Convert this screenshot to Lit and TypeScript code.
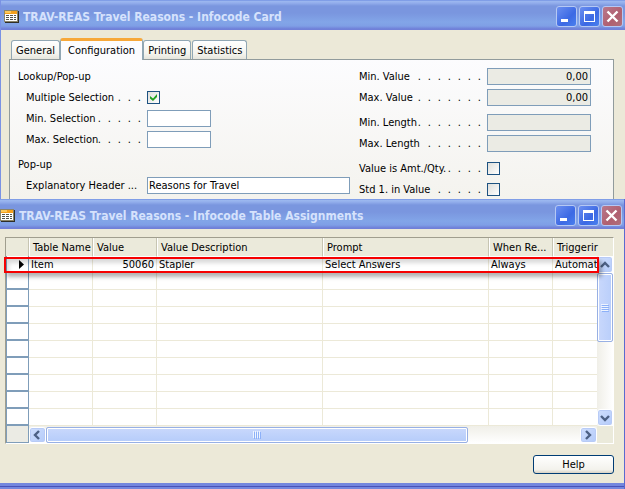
import { LitElement, html, css, svg } from "lit";
import { customElement, property } from "lit/decorators.js";

const formFont = css`11px "DejaVu Sans Condensed", "Open Sans", sans-serif`;

@customElement("title-bar")
class TitleBar extends LitElement {
  @property() caption = "";

  static styles = css`
    :host { display: block; }
    .bar {
      display: flex;
      align-items: center;
      height: 30px;
      box-sizing: border-box;
      padding: 3px 2px 0 3px;
      gap: 4px;
      background: linear-gradient(#6383de 0, #9db9f0 1px, #93aeec 3px, #7a96df 6px, #7a96df 13px, #82a5e8 22px, #7f9fe6 26px, #6f7fd8 29px, #7281d8 30px);
    }
    :host([flush]) .bar { padding-left: 0; }
    h1 {
      flex: 1;
      min-width: 0;
      margin: 0;
      font: bold 12px "DejaVu Sans Condensed", "Open Sans", sans-serif;
      color: #d6e2fc;
      white-space: nowrap;
      overflow: hidden;
    }
    .controls { display: flex; gap: 2px; }
    button {
      width: 21px;
      height: 21px;
      padding: 0;
      border: 1px solid #b5c8f4;
      border-radius: 3px;
      background: linear-gradient(135deg, #6b8ff0, #3c69e4 60%, #4a80ee);
      display: flex;
    }
    .close { background: linear-gradient(135deg, #b9788c, #b06070 60%, #b0707c); }
    svg { display: block; }
  `;

  render() {
    return html`
      <div class="bar">
        <svg width="15" height="13" viewBox="0 0 15 13" shape-rendering="crispEdges" aria-hidden="true">
          <path fill="#8a8468" d="M0 0h14v12H0z" />
          <path fill="#2e2e28" d="M14 1h1v12H1v-1h13z" />
          <path fill="#fff" d="M1 4h12v7H1z" />
          <path fill="#f5a01c" d="M1 1h12v3H1z" />
          <path fill="#fcc95a" d="M1 1h6v2H1z" />
          <path stroke="#55554c" d="M2 5.500h3M6 5.500h3M10 5.500h2M2 7.500h3M6 7.500h3M10 7.500h2M2 9.500h3M6 9.500h3M10 9.500h2" />
        </svg>
        <h1>${this.caption}</h1>
        <div class="controls">
          <button aria-label="Minimize">
            <svg width="19" height="19"><path fill="#fff" d="M4 12h7v3H4z" /></svg>
          </button>
          <button aria-label="Maximize">
            <svg width="19" height="19"><path fill="#fff" fill-rule="evenodd" d="M4 4h11v11H4zM5 7v7h9V7z" /></svg>
          </button>
          <button class="close" aria-label="Close">
            <svg width="19" height="19"><path stroke="#fff" stroke-width="2.4" d="M4.500 4.500l10 10M14.500 4.500l-10 10" /></svg>
          </button>
        </div>
      </div>
    `;
  }
}

interface Field {
  id: string;
  label: string;
  dots: number;
  kind: "check" | "short" | "wide" | "locked";
  value?: string;
  checked?: boolean;
}

const selectionFields: Field[] = [
  { id: "multi", label: "Multiple Selection", dots: 3, kind: "check", checked: true },
  { id: "minsel", label: "Min. Selection", dots: 5, kind: "short" },
  { id: "maxsel", label: "Max. Selection", dots: 5, kind: "short" },
];
const popupFields: Field[] = [
  { id: "header", label: "Explanatory Header ...", dots: 0, kind: "wide", value: "Reasons for Travel" },
];
const valueFields: Field[] = [
  { id: "minval", label: "Min. Value", dots: 7, kind: "locked", value: "0,00" },
  { id: "maxval", label: "Max. Value", dots: 7, kind: "locked", value: "0,00" },
];
const lengthFields: Field[] = [
  { id: "minlen", label: "Min. Length", dots: 7, kind: "locked" },
  { id: "maxlen", label: "Max. Length", dots: 6, kind: "locked" },
];
const flagFields: Field[] = [
  { id: "amt", label: "Value is Amt./Qty.", dots: 4, kind: "check" },
  { id: "std", label: "Std 1. in Value", dots: 5, kind: "check" },
];

@customElement("infocode-card")
class InfocodeCard extends LitElement {
  static styles = css`
    :host { display: block; font: ${formFont}; color: #000; }
    .window { border-left: 1px solid #7a92e4; background: #ece9d8; }
    .tabs { display: flex; align-items: flex-end; height: 29px; padding-left: 10px; }
    .tab {
      font: inherit;
      color: inherit;
      height: 19px;
      padding: 0 4px;
      border: 1px solid #91a7b4;
      border-bottom: 0;
      border-radius: 3px 3px 0 0;
      background: linear-gradient(#fff, #f4f4ee 70%, #e6e5dc);
    }
    .tab + .tab { margin-left: 1px; }
    .tab.active {
      height: 22px;
      padding: 0 7px;
      margin: 0 -1px -1px 0;
      border-top: 3px solid #f7a83a;
      background: #fcfcfe;
      position: relative;
    }
    .panel {
      display: grid;
      grid-template-columns: 341px 1fr;
      height: 140px;
      box-sizing: border-box;
      margin: 0 11px 0 8px;
      padding: 6px 0 0 8px;
      border: solid #919b9c;
      border-width: 1px 1px 0;
      background: linear-gradient(#fcfcfe, #f4f3ee);
    }
    .group { margin-bottom: 4px; }
    .caption { display: flex; align-items: center; height: 21px; margin: 0; font: inherit; }
    .row { display: flex; align-items: center; height: 21px; }
    .left .row { padding-left: 8px; }
    label { display: flex; width: 115px; padding-right: 6px; white-space: nowrap; }
    .right label { width: 122px; }
    .dots { flex: 1; min-width: 0; display: flex; justify-content: flex-end; }
    .dots i { flex: none; width: 10px; text-align: right; font-style: normal; }
    input { box-sizing: border-box; margin: 0; font: inherit; color: inherit; }
    input[type="text"] { height: 17px; padding: 0 1px; border: 1px solid #7f9db9; border-radius: 0; background: #fff; }
    input.short { width: 64px; }
    input.wide { width: 203px; }
    input.locked { width: 104px; padding: 0 2px; text-align: right; background: #ebebe4; }
    input[type="checkbox"] {
      appearance: none;
      width: 13px;
      height: 13px;
      border: 1px solid #1d5281;
      background: linear-gradient(135deg, #dededa, #fff);
      display: grid;
      place-items: center;
    }
    input[type="checkbox"]:checked::before {
      content: "";
      width: 7px;
      height: 7px;
      background: #21a121;
      clip-path: polygon(0 29%, 43% 64%, 100% 0, 100% 43%, 43% 100%, 0 64%);
    }
  `;

  private row(f: Field) {
    return html`
      <div class="row">
        <label for=${f.id}><span>${f.label}</span><span class="dots">${Array.from({ length: f.dots }, () => html`<i>.</i>`)}</span></label>
        ${f.kind === "check"
          ? html`<input type="checkbox" id=${f.id} ?checked=${f.checked} />`
          : html`<input type="text" class=${f.kind} id=${f.id} .value=${f.value ?? ""} ?readonly=${f.kind === "locked"} />`}
      </div>
    `;
  }

  render() {
    return html`
      <section class="window">
        <title-bar caption="TRAV-REAS Travel Reasons - Infocode Card"></title-bar>
        <div class="tabs" role="tablist">
          <button class="tab" role="tab">General</button>
          <button class="tab active" role="tab" aria-selected="true">Configuration</button>
          <button class="tab" role="tab">Printing</button>
          <button class="tab" role="tab">Statistics</button>
        </div>
        <div class="panel">
          <div class="left">
            <div class="group">
              <h2 class="caption">Lookup/Pop-up</h2>
              ${selectionFields.map((f) => this.row(f))}
            </div>
            <div class="group">
              <h2 class="caption">Pop-up</h2>
              ${popupFields.map((f) => this.row(f))}
            </div>
          </div>
          <div class="right">
            <div class="group">${valueFields.map((f) => this.row(f))}</div>
            <div class="group">${lengthFields.map((f) => this.row(f))}</div>
            <div class="group">${flagFields.map((f) => this.row(f))}</div>
          </div>
        </div>
      </section>
    `;
  }
}

const columns = ["Table Name", "Value", "Value Description", "Prompt", "When Re...", "Triggerir"];
const record = ["Item", "50060", "Stapler", "Select Answers", "Always", "Automat"];

const chevrons: Record<string, string> = {
  up: "M3 9l4-4 4 4",
  down: "M3 5l4 4 4-4",
  left: "M9 3l-4 4 4 4",
  right: "M5 3l4 4-4 4",
};

@customElement("table-assignments")
class TableAssignments extends LitElement {
  static styles = css`
    :host { display: block; font: ${formFont}; color: #000; }
    .window { border-right: 1px solid #5a6ad0; background: #ece9d8; }
    .body { padding: 8px 10px 9px 5px; }
    .grid {
      border: 1px solid;
      border-color: #a09e8e #fff #fff #a09e8e;
      position: relative;
    }
    .data { display: grid; grid-template-columns: 1fr 16px; background: #ebeadb; }
    table { width: 100%; border-collapse: separate; border-spacing: 0; table-layout: fixed; }
    th, td { box-sizing: border-box; height: 17px; padding: 2px 2px 0; white-space: nowrap; text-align: left; font-weight: normal; line-height: 14px; }
    thead th { height: 18px; padding: 2px 0 0 3px; }
    thead th + th { border-left: 1px solid #fff; box-shadow: -1px 0 #c7c5b2; background-clip: padding-box; }
    tbody td { background: #fff; border-right: 1px solid #ece9d8; border-bottom: 1px solid #ece9d8; }
    tbody td:last-child { border-right: 0; }
    tbody .selector { border: 1px solid #7f9db9; border-top-width: 0; border-bottom-width: 2px; padding: 2px 4px 0; }
    .selector svg { display: block; margin-left: auto; }
    .c0 { width: 23px; }
    .c1, .c2, .c5 { width: 64px; }
    .c3 { width: 166px; }
    .c4 { width: 166px; }
    .number { text-align: right; }
    .vscroll { display: flex; flex-direction: column; margin-top: 18px; background: linear-gradient(90deg, #f0efe8, #fff); }
    .arrow {
      flex: none;
      width: 16px;
      height: 17px;
      padding: 0;
      border: 1px solid #fff;
      border-radius: 3px;
      background: linear-gradient(135deg, #cfdefd, #b4cbfa);
      box-shadow: inset 0 0 0 1px #b8cbf6;
    }
    .arrow svg { display: block; }
    .thumb {
      display: flex;
      align-items: center;
      justify-content: center;
      border: 1px solid #98b0e4;
      border-radius: 2px;
      box-shadow: inset 0 0 0 1px #fff;
      box-sizing: border-box;
    }
    .vscroll .thumb { height: 69px; background: linear-gradient(90deg, #c9d8fc, #b9cefb); }
    .spacer { flex: 1; }
    .bottom { display: flex; height: 17px; background: #ebeadb; }
    .stub { width: 23px; box-sizing: border-box; border: 1px solid #7f9db9; border-top: 0; background: #ebebe4; }
    .hscroll { flex: 1; display: flex; padding-top: 1px; background: linear-gradient(#f0efe8, #fff); }
    .hscroll .arrow { height: 16px; width: 17px; }
    .hscroll .thumb { width: 422px; height: 16px; background: linear-gradient(#c9d8fc, #b5ccfa); }
    .hcorner { width: 16px; }
    .highlight {
      position: absolute;
      left: -2px;
      right: 14px;
      top: 19px;
      height: 16px;
      box-sizing: border-box;
      border: 2px solid #f60000;
      box-shadow: 3px 4px 4px rgba(0, 0, 0, 0.3), inset 3px 4px 4px rgba(0, 0, 0, 0.15);
      pointer-events: none;
    }
    footer { display: flex; justify-content: flex-end; padding-top: 11px; }
    .help {
      width: 81px;
      height: 19px;
      padding: 0;
      font: inherit;
      color: inherit;
      border: 1px solid #003c74;
      border-radius: 3px;
      background: linear-gradient(#fff, #f3f2ec 80%, #d8d2c4);
    }
    .frame { height: 6px; background: linear-gradient(#7487de 3px, #4a52b8 3px, #4a52b8 4px, #7487de 4px); }
  `;

  private arrow(dir: string) {
    return html`
      <button class="arrow" aria-label="Scroll ${dir}">
        <svg width="14" height="14"><path d=${chevrons[dir]} fill="none" stroke="#4d6185" stroke-width="2.4" /></svg>
      </button>
    `;
  }

  private grip(vertical: boolean) {
    const light = "M0 .5h7M0 2.500h7M0 4.500h7M0 6.500h7";
    return html`
      <svg width="8" height="8" viewBox="0 0 8 8" aria-hidden="true">
        <g transform=${vertical ? "" : "matrix(0 1 1 0 0 0)"}>${svg`<path d=${light} stroke="#eef4fe" /><path d=${light} transform="translate(1 1)" stroke="#8cb0f8" />`}</g>
      </svg>
    `;
  }

  render() {
    return html`
      <section class="window">
        <title-bar flush caption="TRAV-REAS Travel Reasons - Infocode Table Assignments"></title-bar>
        <div class="body">
          <div class="grid">
            <div class="data">
              <table>
                <colgroup>
                  <col class="c0" /><col class="c1" /><col class="c2" /><col class="c3" /><col class="c4" /><col class="c5" /><col />
                </colgroup>
                <thead>
                  <tr><th></th>${columns.map((c) => html`<th scope="col">${c}</th>`)}</tr>
                </thead>
                <tbody>
                  <tr>
                    <td class="selector"><svg width="5" height="9"><path d="M0 0l5 4.500-5 4.500z" /></svg></td>
                    ${record.map((v, i) => html`<td class=${i === 1 ? "number" : ""}>${v}</td>`)}
                  </tr>
                  ${Array.from({ length: 9 }, () => html`<tr><td class="selector"></td>${columns.map(() => html`<td></td>`)}</tr>`)}
                </tbody>
              </table>
              <div class="vscroll">
                ${this.arrow("up")}
                <div class="thumb">${this.grip(true)}</div>
                <div class="spacer"></div>
                ${this.arrow("down")}
              </div>
            </div>
            <div class="bottom">
              <div class="stub"></div>
              <div class="hscroll">
                ${this.arrow("left")}
                <div class="thumb">${this.grip(false)}</div>
                <div class="spacer"></div>
                ${this.arrow("right")}
              </div>
              <div class="hcorner"></div>
            </div>
            <div class="highlight"></div>
          </div>
          <footer><button class="help">Help</button></footer>
        </div>
        <div class="frame"></div>
      </section>
    `;
  }
}

@customElement("app-root")
class AppRoot extends LitElement {
  static styles = css`
    :host { display: block; background: #ece9d8; }
  `;

  render() {
    return html`
      <infocode-card></infocode-card>
      <table-assignments></table-assignments>
    `;
  }
}
